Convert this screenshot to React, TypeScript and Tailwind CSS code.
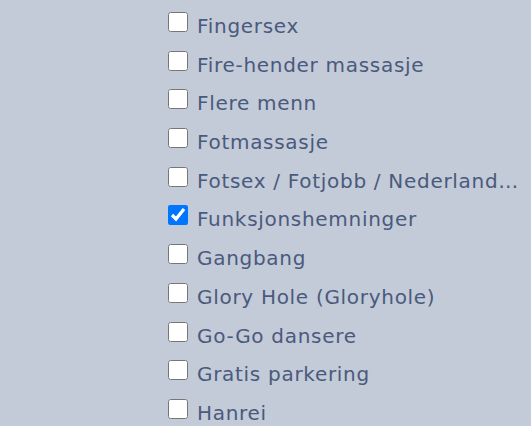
const items = [
  { label: "Fingersex", checked: false },
  { label: "Fire-hender massasje", checked: false },
  { label: "Flere menn", checked: false },
  { label: "Fotmassasje", checked: false },
  { label: "Fotsex / Fotjobb / Nederlandsk fotjobb", checked: false },
  { label: "Funksjonshemninger", checked: true },
  { label: "Gangbang", checked: false },
  { label: "Glory Hole (Gloryhole)", checked: false },
  { label: "Go-Go dansere", checked: false },
  { label: "Gratis parkering", checked: false },
  { label: "Hanrei", checked: false },
];

export default function App() {
  return (
    <div
      className="w-[531px] h-[426px] overflow-hidden bg-[#c3cad8] pl-[168px] pt-[2px]"
      style={{ fontFamily: '"DejaVu Sans", Verdana, sans-serif' }}
    >
      {items.map((item) => (
        <label key={item.label} className="flex items-start h-[38.7px] cursor-pointer">
          <input
            type="checkbox"
            defaultChecked={item.checked}
            className="m-0 mt-[10px] w-5 h-5 shrink-0"
          />
          <span className="ml-[9px] mt-[13px] text-[20px] leading-[23px] tracking-[0.7px] text-[#4a5a7c] w-[322px] truncate">
            {item.label}
          </span>
        </label>
      ))}
    </div>
  );
}
